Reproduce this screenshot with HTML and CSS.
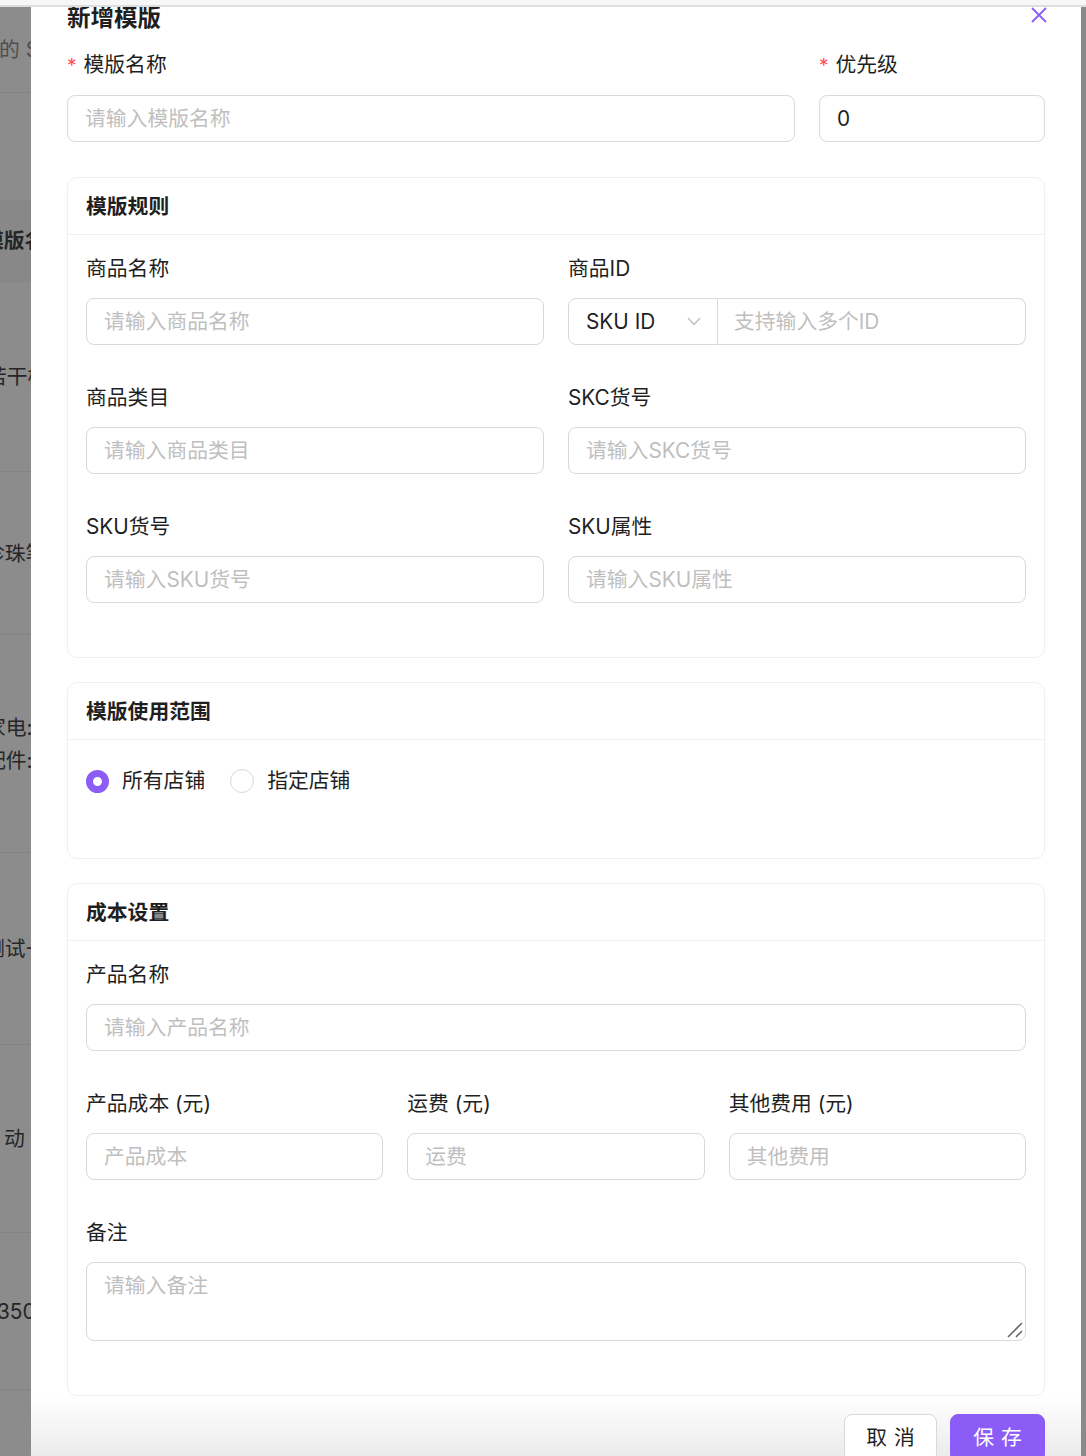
FILE: index.html
```html
<!DOCTYPE html>
<html lang="zh-CN">
<head>
<meta charset="utf-8">
<title>新增模版</title>
<link rel="stylesheet" href="styles.css">
</head>
<body>
<div class="topbar"></div>
<div class="stage">
  <aside class="bg-strip">
    <div class="bg-row r1"><span class="t light shift-1">的 SKU</span></div>
    <div class="bg-row r2"></div>
    <div class="bg-row r3 head"><span class="t bold shift-17">模版名称</span></div>
    <div class="bg-row r4"><span class="t shift-14">若干模</span></div>
    <div class="bg-row r5"><span class="t shift-16">珍珠笔</span></div>
    <div class="bg-row r6"><span class="t shift-15">家电:</span><span class="t shift-15">配件:</span></div>
    <div class="bg-row r7"><span class="t shift-16">测试-1</span></div>
    <div class="bg-row r8"><span class="t shift4">动</span></div>
    <div class="bg-row r9"><span class="t shift-3">350</span></div>
    <div class="bg-row r10"></div>
  </aside>

  <main class="modal">
    <div class="modal-head">
      <h1 class="modal-title">新增模版</h1>
      <button class="close" aria-label="关闭">
        <svg width="16" height="16" viewBox="0 0 16 16"><path d="M1.5 1.5 L14.5 14.5 M14.5 1.5 L1.5 14.5" stroke="#8b5cf6" stroke-width="1.8" stroke-linecap="round" fill="none"/></svg>
      </button>
    </div>

    <div class="row-top">
      <div class="field">
        <label class="label"><span class="req">*</span>模版名称</label>
        <div class="input placeholder">请输入模版名称</div>
      </div>
      <div class="field">
        <label class="label"><span class="req">*</span>优先级</label>
        <div class="input value">0</div>
      </div>
    </div>

    <section class="card">
      <div class="card-head">模版规则</div>
      <div class="card-body grid2">
        <div class="field">
          <label class="label">商品名称</label>
          <div class="input placeholder">请输入商品名称</div>
        </div>
        <div class="field">
          <label class="label">商品ID</label>
          <div class="combo">
            <div class="select">
              <span class="value-text">SKU ID</span>
              <svg class="chev" width="14" height="9" viewBox="0 0 14 9"><path d="M1 1 L7 7.5 L13 1" stroke="#bfbfbf" stroke-width="1.3" fill="none"/></svg>
            </div>
            <div class="combo-input placeholder">支持输入多个ID</div>
          </div>
        </div>
        <div class="field">
          <label class="label">商品类目</label>
          <div class="input placeholder">请输入商品类目</div>
        </div>
        <div class="field">
          <label class="label">SKC货号</label>
          <div class="input placeholder">请输入SKC货号</div>
        </div>
        <div class="field">
          <label class="label">SKU货号</label>
          <div class="input placeholder">请输入SKU货号</div>
        </div>
        <div class="field">
          <label class="label">SKU属性</label>
          <div class="input placeholder">请输入SKU属性</div>
        </div>
      </div>
    </section>

    <section class="card">
      <div class="card-head">模版使用范围</div>
      <div class="card-body scope">
        <div class="radios">
          <span class="radio-item"><span class="radio checked"></span>所有店铺</span>
          <span class="radio-item"><span class="radio"></span>指定店铺</span>
        </div>
      </div>
    </section>

    <section class="card">
      <div class="card-head">成本设置</div>
      <div class="card-body">
        <div class="field">
          <label class="label">产品名称</label>
          <div class="input placeholder">请输入产品名称</div>
        </div>
        <div class="grid3">
          <div class="field">
            <label class="label">产品成本 (元)</label>
            <div class="input placeholder">产品成本</div>
          </div>
          <div class="field">
            <label class="label">运费 (元)</label>
            <div class="input placeholder">运费</div>
          </div>
          <div class="field">
            <label class="label">其他费用 (元)</label>
            <div class="input placeholder">其他费用</div>
          </div>
        </div>
        <div class="field">
          <label class="label">备注</label>
          <div class="textarea-wrap">
            <textarea class="textarea" placeholder="请输入备注"></textarea>
            <svg class="resize-handle" width="16" height="16" viewBox="0 0 16 16"><path d="M1 15 L15 1 M9 15 L15 9" stroke="#6b6b6b" stroke-width="1.6" fill="none"/></svg>
          </div>
        </div>
      </div>
    </section>

    <footer class="footer">
      <button class="btn"><span>取消</span></button>
      <button class="btn primary"><span>保存</span></button>
    </footer>
  </main>
  <div class="right-strip"></div>
</div>
</body>
</html>
```

FILE: styles.css
```css
* { box-sizing: border-box; }
html, body { margin: 0; padding: 0; }
body {
  width: 1086px;
  height: 1456px;
  overflow: hidden;
  background: #fff;
  font-family: "Inter", "Noto Sans CJK SC", sans-serif;
  color: #1f1f1f;
}
.topbar {
  height: 7px;
  background: #f7f7f7;
  border-bottom: 2px solid #dedede;
}
.stage {
  display: flex;
  height: 1449px;
  overflow: hidden;
}
.bg-strip {
  width: 31px;
  flex: none;
  background: #8c8c8c;
  overflow: hidden;
  display: flex;
  flex-direction: column;
}
.bg-row {
  flex: none;
  border-bottom: 1px solid #848484;
  display: flex;
  flex-direction: column;
  justify-content: center;
  overflow: hidden;
  white-space: nowrap;
}
.bg-row .t {
  font-size: 20.8px;
  line-height: 33px;
  color: #262626;
  display: block;
}
.bg-row .t.light { color: #4e4e4e; }
.bg-row .t.bold { font-weight: 700; }
.shift-1 { margin-left: -1px; }
.shift-3 { margin-left: -3px; }
.shift-14 { margin-left: -14px; }
.shift-15 { margin-left: -15px; }
.shift-16 { margin-left: -16px; }
.shift-17 { margin-left: -17px; }
.shift4 { margin-left: 4px; }
.r1 { height: 86px; }
.r2 { height: 107px; border-bottom: none; }
.r3 { height: 82px; background: #888; }
.r4 { height: 190px; }
.r5 { height: 163px; }
.r6 { height: 218px; }
.r7 { height: 192px; }
.r8 { height: 188px; }
.r9 { height: 157px; }
.r10 { flex: 1; border-bottom: none; }

.right-strip {
  width: 5px;
  flex: none;
  background: #8a8a8a;
}

.modal {
  flex: 1;
  position: relative;
  background: #fff;
  padding: 0 36px;
  display: flex;
  flex-direction: column;
}
.modal-head {
  height: 22px;
  display: flex;
  align-items: center;
}
.modal-title {
  margin: 0;
  font-size: 23.5px;
  line-height: 22px;
  font-weight: 700;
  color: #1f1f1f;
}
.close {
  position: absolute;
  top: 0;
  right: 34px;
  width: 16px;
  height: 16px;
  padding: 0;
  border: none;
  background: none;
  display: block;
}
.close svg { display: block; }

.row-top {
  margin-top: 22px;
  display: grid;
  grid-template-columns: 1fr 226px;
  column-gap: 24px;
}
.field { display: flex; flex-direction: column; }
.label {
  font-size: 20.8px;
  line-height: 28px;
  margin-bottom: 15px;
  display: block;
  white-space: nowrap;
}
.req {
  color: #ff4d4f;
  margin-right: 7px;
  font-size: 19px;
}
.input {
  height: 47px;
  border: 1px solid #d9d9d9;
  border-radius: 8px;
  padding: 0 17px;
  font-size: 20.8px;
  line-height: 45px;
  background: #fff;
  white-space: nowrap;
  overflow: hidden;
}
.placeholder { color: #bfbfbf; }
.value { color: #1f1f1f; }

.card {
  border: 1px solid #f0f0f0;
  border-radius: 10px;
  margin-top: 35px;
  background: #fff;
}
.card + .card { margin-top: 24px; }
.card-head {
  height: 57px;
  padding: 0 18px;
  border-bottom: 1px solid #f0f0f0;
  font-size: 20.8px;
  font-weight: 700;
  line-height: 58px;
}
.card-body {
  padding: 20px 18px 15px;
}
.card-body .field { margin-bottom: 39px; }
.card-body .label { margin-bottom: 15px; }
.grid2 {
  display: grid;
  grid-template-columns: 1fr 1fr;
  column-gap: 24px;
}
.grid3 {
  display: grid;
  grid-template-columns: 1fr 1fr 1fr;
  column-gap: 24px;
}

.combo {
  display: flex;
  height: 47px;
}
.select {
  width: 150px;
  flex: none;
  border: 1px solid #d9d9d9;
  border-radius: 8px 0 0 8px;
  padding: 0 17px;
  display: flex;
  align-items: center;
  justify-content: space-between;
  font-size: 20.8px;
}
.select .chev { margin-right: -1px; }
.combo-input {
  flex: 1;
  border: 1px solid #d9d9d9;
  border-left: none;
  border-radius: 0 8px 8px 0;
  padding: 0 16px;
  font-size: 20.8px;
  line-height: 45px;
  white-space: nowrap;
}

.scope { padding-top: 27px; }
.radios {
  display: flex;
  gap: 25px;
  height: 28px;
  margin-bottom: 48px;
}
.radio-item {
  display: flex;
  align-items: center;
  gap: 13px;
  font-size: 20.8px;
  line-height: 28px;
}
.radio {
  width: 24px;
  height: 24px;
  border-radius: 50%;
  border: 1px solid #d9d9d9;
  background: #fff;
  flex: none;
}
.radio.checked {
  width: 23px;
  height: 23px;
  border: 7.5px solid #8b5cf6;
}

.textarea-wrap {
  position: relative;
}
.textarea {
  display: block;
  width: 100%;
  height: 79px;
  border: 1px solid #d9d9d9;
  border-radius: 8px;
  padding: 9px 17px;
  font-family: inherit;
  font-size: 20.8px;
  line-height: 28px;
  color: #1f1f1f;
  resize: none;
  outline: none;
}
.textarea::placeholder { color: #bfbfbf; }
.resize-handle {
  position: absolute;
  right: 3px;
  bottom: 3px;
  display: block;
}

.footer {
  margin: 0 -36px;
  padding: 18px 36px 0;
  display: flex;
  justify-content: flex-end;
  align-items: flex-start;
  gap: 13px;
  flex: 1;
  background: linear-gradient(to bottom, #ffffff 0%, #f2f2f2 60%, #e9e9e9 100%);
}
.btn {
  height: 48px;
  width: 93px;
  padding: 0;
  flex: none;
  border: 1px solid #d9d9d9;
  border-radius: 8px;
  background: #fff;
  font-family: inherit;
  font-size: 20.8px;
  line-height: 46px;
  color: #1f1f1f;
  white-space: nowrap;
  text-align: center;
}
.btn span {
  letter-spacing: 0.34em;
  margin-right: -0.34em;
}
.btn.primary {
  width: 95px;
  background: #8b5cf6;
  border-color: #8b5cf6;
  color: #fff;
}
```
